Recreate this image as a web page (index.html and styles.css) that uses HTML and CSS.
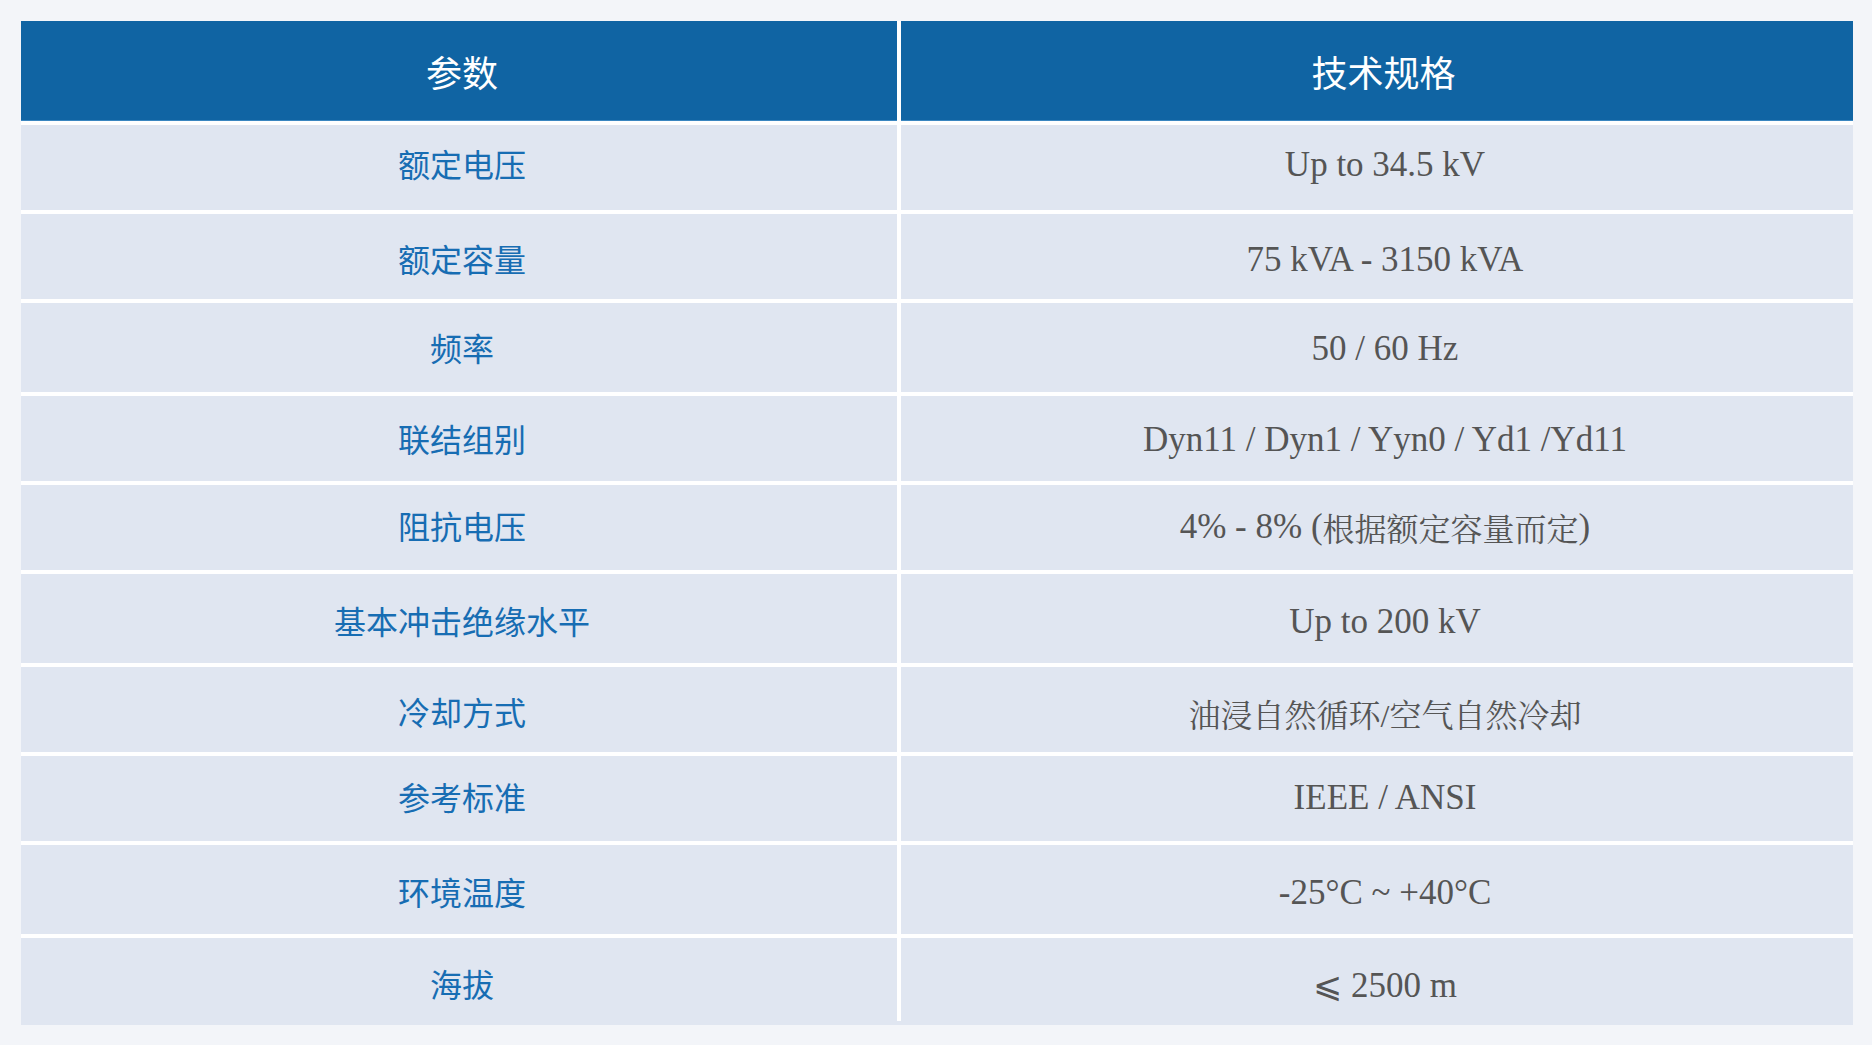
FILE: index.html
```html
<!DOCTYPE html>
<html lang="zh-CN">
<head>
<meta charset="utf-8">
<title>技术参数</title>
<link rel="stylesheet" href="styles.css">
</head>
<body>
<div class="page">
  <div class="spec">
    <div class="spec-grid">
      <div class="cell head">参数</div>
      <div class="cell head head-spec">技术规格</div>

      <div class="cell key">额定电压</div>
      <div class="cell val">Up to 34.5 kV</div>

      <div class="cell key shift-6">额定容量</div>
      <div class="cell val shift-6">75 kVA - 3150 kVA</div>

      <div class="cell key shift-4">频率</div>
      <div class="cell val shift-4">50 / 60 Hz</div>

      <div class="cell key shift-4">联结组别</div>
      <div class="cell val shift-4">Dyn11 / Dyn1 / Yyn0 / Yd1 /Yd11</div>

      <div class="cell key shift-2">阻抗电压</div>
      <div class="cell val shift-2">4% - 8% (<span class="cjk">根据额定容量而定</span>)</div>

      <div class="cell key shift-6">基本冲击绝缘水平</div>
      <div class="cell val shift-6">Up to 200 kV</div>

      <div class="cell key shift-6">冷却方式</div>
      <div class="cell val shift-6"><span class="cjk">油浸自然循环/空气自然冷却</span></div>

      <div class="cell key shift-2">参考标准</div>
      <div class="cell val shift-2">IEEE / ANSI</div>

      <div class="cell key shift-6">环境温度</div>
      <div class="cell val shift-6">-25°C ~ +40°C</div>

      <div class="cell key last">海拔</div>
      <div class="cell val last">⩽ 2500 m</div>
    </div>
  </div>
</div>
</body>
</html>
```

FILE: styles.css
```css
* {
  box-sizing: border-box;
}

html, body {
  margin: 0;
  padding: 0;
  background: #f3f5f9;
}

.page {
  padding: 21px 19px 20px 21px;
}

.spec {
  width: 1832px;
  background: #e0e6f1;
  padding-bottom: 4px;
}

.spec-grid {
  display: grid;
  grid-template-columns: 876px 952px;
  grid-template-rows: 100px 85px 85px 89px 85px 85px 89px 85px 85px 89px 83px;
  gap: 4px;
  background: #ffffff;
}

.cell {
  display: flex;
  align-items: center;
  justify-content: center;
  background: #e0e6f1;
  white-space: nowrap;
}

.head {
  background: #1064a3;
  border-bottom: 1px solid #3a86c0;
  color: #ffffff;
  font-family: "Noto Sans CJK SC", "Noto Sans", sans-serif;
  font-size: 36px;
  font-weight: 400;
  padding-left: 6px;
}

.head-spec {
  padding-left: 13px;
}

.key {
  color: #176db3;
  font-family: "Noto Sans CJK SC", "Noto Sans", sans-serif;
  font-size: 32px;
  font-weight: 400;
  padding-left: 6px;
  padding-bottom: 10px;
}

.val {
  color: #555555;
  font-family: "Liberation Serif", "Noto Serif CJK SC", "Noto Sans CJK SC", serif;
  font-size: 35px;
  padding-left: 16px;
  padding-bottom: 5px;
}

.cjk {
  font-size: 32px;
}

.shift-2 {
  padding-top: 4px;
}

.shift-4 {
  padding-top: 8px;
}

.shift-6 {
  padding-top: 12px;
}

.key.last,
.val.last {
  padding-top: 17px;
}
```
